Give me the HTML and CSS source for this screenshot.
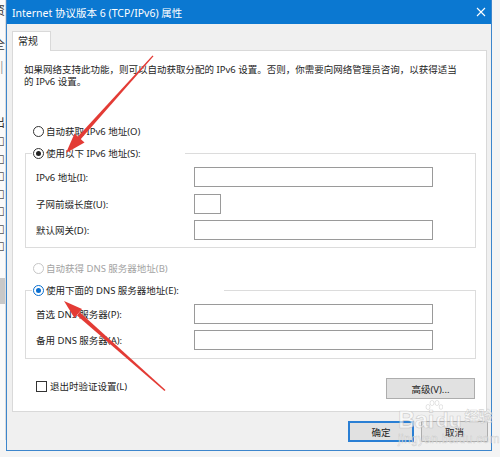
FILE: index.html
```html
<!DOCTYPE html>
<html lang="zh-CN">
<head>
  <meta charset="UTF-8" />
  <title>Internet 协议版本 6 (TCP/IPv6) 属性</title>
  <link rel="stylesheet" href="styles.css">
</head>
<body>
  <div class="desk">
    <div class="behind">
      <span class="bk t1">资</span>
      <span class="bk t2">全</span>
      <span class="bk t3">|</span>
      <span class="bk t4">出</span>
      <span class="bk chk">☐</span>
      <span class="bk chk">☐</span>
      <span class="bk chk">☐</span>
      <span class="bk chk">☐</span>
      <span class="bk chk">☐</span>
      <span class="bk chk">☐</span>
      <span class="bk chk">☐</span>
      <span class="bk bar"></span>
    </div>

    <div class="dialog">
      <div class="titlebar">
        <span>Internet 协议版本 6 (TCP/IPv6) 属性</span>
        <svg class="close" width="10" height="10" viewBox="0 0 10 10"><path d="M1 1L9 9M9 1L1 9" stroke="#fff" stroke-width="1.1"/></svg>
      </div>

      <div class="tabs"><div class="tab">常规</div></div>

      <div class="panel">
        <p class="desc">如果网络支持此功能，则可以自动获取分配的 IPv6 设置。否则，你需要向网络管理员咨询，以获得适当<br>的 IPv6 设置。</p>

        <label class="opt first"><span class="radio"></span>自动获取 IPv6 地址(O)</label>
        <fieldset class="group">
          <legend class="leg-ip"><span class="opt"><span class="radio on"></span>使用以下 IPv6 地址(S):</span></legend>
          <div class="fields">
            <span>IPv6 地址(I):</span><span class="box"></span>
            <span>子网前缀长度(U):</span><span class="box short"></span>
            <span>默认网关(D):</span><span class="box"></span>
          </div>
        </fieldset>

        <label class="opt dns off"><span class="radio"></span>自动获得 DNS 服务器地址(B)</label>
        <fieldset class="group">
          <legend class="leg-dns"><span class="opt"><span class="radio on focus"></span>使用下面的 DNS 服务器地址(E):</span></legend>
          <div class="fields dns-fields">
            <span>首选 DNS 服务器(P):</span><span class="box"></span>
            <span>备用 DNS 服务器(A):</span><span class="box"></span>
          </div>
        </fieldset>

        <div class="foot">
          <label class="opt"><span class="check"></span>退出时验证设置(L)</label>
          <span class="btn adv">高级(V)...</span>
        </div>
      </div>

      <div class="buttons">
        <span class="btn ok">确定</span>
        <span class="btn">取消</span>
      </div>
    </div>
  </div>

  <svg class="marks" width="500" height="457" viewBox="0 0 500 457">
    <polygon points="152.5,55.5 153.5,56.3 80,140 77,137.5" fill="#e33b35"/>
    <polygon points="66,153 74.5,133.5 84.5,142.5" fill="#e33b35"/>
    <polygon points="165.5,390 164.5,391 77,315.5 79.5,312" fill="#e33b35"/>
    <polygon points="64,301 82,309 74.5,318" fill="#e33b35"/>
  </svg>

  <div class="watermark">
    <div class="wm-top">
      <span class="wm-bai">Bai</span>
      <span class="wm-du">du</span>
      <span class="wm-cn">经验</span>
      <svg class="paw" width="18" height="14" viewBox="0 0 18 14">
        <ellipse cx="3" cy="7" rx="2" ry="2.6"/><ellipse cx="7" cy="3" rx="2" ry="2.6"/>
        <ellipse cx="12" cy="3" rx="2" ry="2.6"/><ellipse cx="16" cy="7" rx="1.8" ry="2.4"/>
      </svg>
    </div>
    <span class="wm-url">jingyan.baidu.com</span>
  </div>
</body>
</html>
```

FILE: styles.css
```css
* { box-sizing: border-box; }
body { margin: 0; background: #f4f4f4; font-family: "Noto Sans", "Noto Sans CJK SC", sans-serif; font-size: 9.5px; color: #1e1e1e; position: relative; overflow: hidden; }

.desk { display: flex; height: 457px; }

/* window behind the dialog */
.behind { width: 6px; height: 440px; overflow: hidden; background: #fafafa; border-right: 1px solid #dcdcdc; display: flex; flex-direction: column; align-items: flex-end; padding-top: 4px; }
.bk { font-size: 12px; line-height: 14px; color: #333; flex: none; }
.t2 { margin-top: 20px; }
.t3 { margin-top: 8px; color: #999; }
.t4 { margin-top: 42px; margin-bottom: 3px; }
.chk { line-height: 17.5px; color: #555; }
.bar { width: 8px; height: 26px; margin-top: 22px; background: #c8c8c8; }

/* dialog */
.dialog { width: 486px; height: 451px; border: 1px solid #3d86cc; border-top: none; background: #f0f0f0; display: flex; flex-direction: column; }
.titlebar { height: 24px; background: #0b78d1; color: #fff; font-size: 10.5px; display: flex; align-items: center; justify-content: space-between; padding: 0 5px 0 5px; }
.close { margin-top: -1px; }

.tabs { display: flex; padding: 7px 0 0 5px; }
.tab { width: 39px; height: 20px; padding-left: 5px; line-height: 18px; background: #fff; border: 1px solid #d9d9d9; border-bottom: none; margin-bottom: -1px; position: relative; z-index: 1; font-size: 10px; }

.panel { height: 362px; margin: 0 4px 0 5px; background: #fff; border: 1px solid #d9d9d9; display: flex; flex-direction: column; }
.desc { margin: 13px 0 0 11px; line-height: 12px; }

.opt { display: flex; align-items: center; height: 16px; gap: 2px; white-space: nowrap; }
.first { margin-top: 35px; padding-left: 20px; }
.dns { margin-top: 12px; padding-left: 20px; }
.off { color: #a3a3a3; }

.radio { width: 11px; height: 11px; border: 1px solid #333; border-radius: 50%; background: #fff; display: flex; align-items: center; justify-content: center; }
.radio.on::after { content: ""; width: 5px; height: 5px; border-radius: 50%; background: #222; }
.radio.focus { border-color: #0a6fd0; }
.radio.focus::after { background: #0a6fd0; }
.off .radio { border-color: #c6c6c6; }

.group { margin: 6px 10px 0 12px; padding: 0 0 7px 0; border: 1px solid #dcdcdc; min-width: 0; }
.group legend { margin-left: 6px; padding: 0 0 0 1px; }
.leg-ip { width: 153px; }
.leg-dns { width: 192px; }

.fields { display: grid; grid-template-columns: 158px 239px; grid-auto-rows: 20px; row-gap: 6.5px; align-items: center; margin-top: 6px; padding-left: 10px; }
.dns-fields { row-gap: 6px; padding-bottom: 1px; }
.box { height: 20px; background: #fff; border: 1px solid #9a9a9a; }
.box.short { width: 27px; }

.foot { display: flex; justify-content: space-between; align-items: flex-start; margin-top: 19px; padding: 0 11px 0 23px; }
.check { width: 11px; height: 11px; border: 1px solid #333; margin-right: 1px; }

.btn { display: flex; align-items: center; justify-content: center; height: 21px; background: #e1e1e1; border: 1px solid #adadad; }
.adv { width: 89px; }
.buttons { display: flex; justify-content: flex-end; gap: 7px; margin-top: 9px; padding-right: 3px; }
.buttons .btn { width: 67px; }
.btn.ok { width: 66px; border: 2px solid #2a7fd4; }

/* annotation overlays */
.marks { position: absolute; left: 0; top: 0; pointer-events: none; }

.watermark { position: absolute; left: 398px; top: 404px; display: flex; flex-direction: column; pointer-events: none; color: rgba(255, 255, 255, 0.6); font-family: "Liberation Sans", sans-serif; font-weight: bold; }
.wm-top { display: flex; align-items: flex-end; position: relative; height: 28px; }
.wm-bai, .wm-du { -webkit-text-stroke: 0.7px rgba(160, 160, 160, 0.45); line-height: 24px; }
.wm-bai { font-size: 24px; letter-spacing: -0.5px; }
.wm-du { font-size: 21px; margin-left: 2px; }
.wm-cn { font-family: "Noto Sans CJK SC", sans-serif; font-size: 14px; line-height: 16px; margin: 0 0 9px 3px; -webkit-text-stroke: 0.6px rgba(160, 160, 160, 0.45); }
.paw { position: absolute; left: 27px; top: -4px; fill: rgba(255, 255, 255, 0.6); stroke: rgba(160, 160, 160, 0.4); stroke-width: 0.7; }
.wm-url { font-size: 12px; line-height: 13px; font-weight: normal; letter-spacing: 0.3px; margin-top: 1px; -webkit-text-stroke: 0.5px rgba(160, 160, 160, 0.45); }
```
